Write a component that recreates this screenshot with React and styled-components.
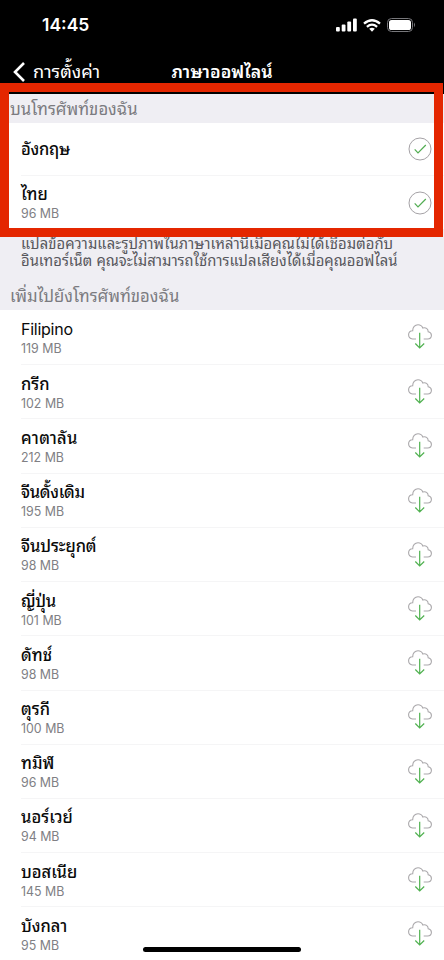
import React from 'react';
import styled, { createGlobalStyle, css } from 'styled-components';

const GlobalStyle = createGlobalStyle`
  * {
    box-sizing: border-box;
  }

  body {
    margin: 0;
    background: #fff;
    font-family: Inter, 'Noto Sans Thai Looped', Loma, 'Noto Sans', sans-serif;
  }
`;

const Screen = styled.main`
  position: relative;
  display: flex;
  flex-direction: column;
  width: 444px;
  height: 960px;
  overflow: hidden;
  background: #fff;
`;

const Header = styled.header`
  flex: none;
  height: 94px;
  background: #000;
  color: #fff;
`;

const StatusBar = styled.div`
  display: flex;
  justify-content: space-between;
  align-items: center;
  height: 50px;
  padding: 0 28px 0 42px;
`;

const Clock = styled.span`
  font-size: 17.5px;
  font-weight: 600;
  line-height: 20px;
`;

const StatusIcons = styled.div`
  display: flex;
  align-items: center;
  gap: 6px;
`;

const NavBar = styled.nav`
  display: grid;
  grid-template-columns: 1fr auto 1fr;
  align-items: center;
  height: 44px;
  padding-left: 13px;
`;

const BackButton = styled.button`
  display: flex;
  align-items: center;
  gap: 8px;
  padding: 0;
  border: none;
  background: none;
  color: #fff;
  font-family: inherit;
`;

const Fit = styled.span`
  display: block;
  white-space: nowrap;
  letter-spacing: ${({ $spacing }) => $spacing || 0}px;
`;

const BackLabel = styled(Fit)`
  padding-bottom: 2px;
  font-size: 18.2px;
  line-height: 22px;
`;

const Title = styled(Fit)`
  margin-right: 13px;
  font-size: 17.7px;
  font-weight: 600;
  line-height: 24px;
`;

const SectionTitle = styled.h2`
  display: flex;
  align-items: center;
  flex: none;
  height: 29px;
  margin: 0;
  padding: 0 0 3px 10px;
  background: #efeef3;
  color: #7b7b80;
  font-size: 16.7px;
  font-weight: 400;
`;

const List = styled.ul`
  flex: none;
  margin: 0;
  padding: 0;
  list-style: none;
`;

const Row = styled.li`
  display: flex;
  justify-content: space-between;
  align-items: center;
  height: ${({ $height }) => $height || 54.23}px;
  margin-left: 21px;
  padding: 0.6px 12px 0 0;

  & + & {
    border-top: 1px solid #f5f5f6;
  }
`;

const Name = styled(Fit)`
  color: #0a0a0a;
  font-size: 16.5px;
  font-weight: 500;
  line-height: 22px;

  ${({ $latin }) =>
    $latin &&
    css`
      font-size: 16px;
      font-weight: 400;
    `}
`;

const Size = styled.span`
  display: block;
  padding-top: 1px;
  color: #808084;
  font-size: 12.4px;
  line-height: 16px;
`;

const Footnote = styled.div`
  flex: none;
  height: 52px;
  padding: 7px 0 0 21px;
  background: #efeef3;
  color: #57575c;
  font-size: 14.8px;
  line-height: 17px;
`;

const Highlight = styled.div`
  position: absolute;
  top: 83px;
  left: 0;
  width: 443px;
  height: 154px;
  border: 9px solid #e42600;
`;

const HomeIndicator = styled.div`
  position: absolute;
  bottom: 8px;
  left: 143px;
  width: 158px;
  height: 5px;
  border-radius: 3px;
  background: #000;
`;

const SignalIcon = () => (
  <svg width="21" height="14" viewBox="0 0 21 14" fill="#fff">
    <rect x="0" y="9" width="3.8" height="4.5" rx="1" />
    <rect x="5.7" y="6.5" width="3.8" height="7" rx="1" />
    <rect x="11.3" y="3.6" width="3.8" height="9.9" rx="1" />
    <rect x="17" y="0.5" width="3.8" height="13" rx="1" />
  </svg>
);

const WifiIcon = () => (
  <svg width="18" height="13" viewBox="0 0 18 13">
    <g fill="none" stroke="#fff" strokeWidth="2.3">
      <path d="M1 4.7Q9-2.2 17 4.7" />
      <path d="M3.9 7.8Q9 3.5 14.1 7.8" />
    </g>
    <path d="M6.2 9.8Q9 7.8 11.8 9.8L9 12.8Z" fill="#fff" />
  </svg>
);

const BatteryIcon = () => (
  <svg width="29" height="14" viewBox="0 0 29 14">
    <rect x="0.5" y="0.5" width="25" height="13" rx="4" fill="none" stroke="#77777b" />
    <rect x="2" y="2" width="22" height="10" rx="2.6" fill="#fff" />
    <path d="M27 4.6Q29 7 27 9.2Z" fill="#77777b" />
  </svg>
);

const BackIcon = () => (
  <svg width="12" height="20" viewBox="0 0 12 20" fill="none" stroke="#fff" strokeWidth="2.6">
    <path d="M11 1L2 10L11 19" />
  </svg>
);

const CheckIcon = () => (
  <svg width="24" height="24" viewBox="0 0 24 24" fill="none">
    <circle cx="12" cy="12" r="11" stroke="#a5a2a6" strokeWidth="1" />
    <path d="M6.7 12.4L10 15.8L17.8 8" stroke="#52ad52" strokeWidth="1.2" />
  </svg>
);

const DownloadIcon = () => (
  <svg width="24" height="26" viewBox="0 0 24 26" fill="none">
    <path
      d="M8 15H4.5C2.3 14.7.6 13 .6 10.8C.6 8.5 2.3 6.9 4.7 6.8C4.6 3.3 7 .8 10 .8C12.4.8 14 2 14.8 4C17.7 3 20.2 4.8 20.2 7.7C22.2 8.1 23.4 9.5 23.4 11.3C23.4 13.4 21.8 15 19.6 15H15.7"
      stroke="#aaa8ab"
      strokeWidth="1.1"
    />
    <path d="M11.7 8.7V24M7.3 19.5L11.7 24L16.2 19.5" stroke="#50b150" strokeWidth="1.2" />
  </svg>
);

const languages = [
  { name: 'Filipino', size: '119 MB', latin: true, spacing: -0.25 },
  { name: 'กรีก', size: '102 MB' },
  { name: 'คาตาลัน', size: '212 MB', spacing: 0.3 },
  { name: 'จีนดั้งเดิม', size: '195 MB', spacing: -0.3 },
  { name: 'จีนประยุกต์', size: '98 MB', spacing: -0.1 },
  { name: 'ญี่ปุ่น', size: '101 MB', spacing: -0.3 },
  { name: 'ดัทช์', size: '98 MB' },
  { name: 'ตุรกี', size: '100 MB' },
  { name: 'ทมิฬ', size: '96 MB' },
  { name: 'นอร์เวย์', size: '94 MB' },
  { name: 'บอสเนีย', size: '145 MB' },
  { name: 'บังกลา', size: '95 MB' },
];

const App = () => {
  return (
    <Screen>
      <GlobalStyle />
      <Header>
        <StatusBar>
          <Clock>14:45</Clock>
          <StatusIcons>
            <SignalIcon />
            <WifiIcon />
            <BatteryIcon />
          </StatusIcons>
        </StatusBar>
        <NavBar>
          <BackButton>
            <BackIcon />
            <BackLabel>การตั้งค่า</BackLabel>
          </BackButton>
          <Title>ภาษาออฟไลน์</Title>
        </NavBar>
      </Header>
      <SectionTitle>
        <Fit>บนโทรศัพท์ของฉัน</Fit>
      </SectionTitle>
      <List>
        <Row $height={52}>
          <Name $spacing={-0.3}>อังกฤษ</Name>
          <CheckIcon />
        </Row>
        <Row $height={54}>
          <div>
            <Name>ไทย</Name>
            <Size>96 MB</Size>
          </div>
          <CheckIcon />
        </Row>
      </List>
      <Footnote>
        <Fit $spacing={0.08}>แปลข้อความและรูปภาพในภาษาเหล่านี้เมื่อคุณไม่ได้เชื่อมต่อกับ</Fit>
        <Fit>อินเทอร์เน็ต คุณจะไม่สามารถใช้การแปลเสียงได้เมื่อคุณออฟไลน์</Fit>
      </Footnote>
      <SectionTitle>
        <Fit>เพิ่มไปยังโทรศัพท์ของฉัน</Fit>
      </SectionTitle>
      <List>
        {languages.map(({ name, size, latin, spacing }) => (
          <Row key={name}>
            <div>
              <Name $latin={latin} $spacing={spacing}>
                {name}
              </Name>
              <Size>{size}</Size>
            </div>
            <DownloadIcon />
          </Row>
        ))}
      </List>
      <Highlight />
      <HomeIndicator />
    </Screen>
  );
};

export default App;
